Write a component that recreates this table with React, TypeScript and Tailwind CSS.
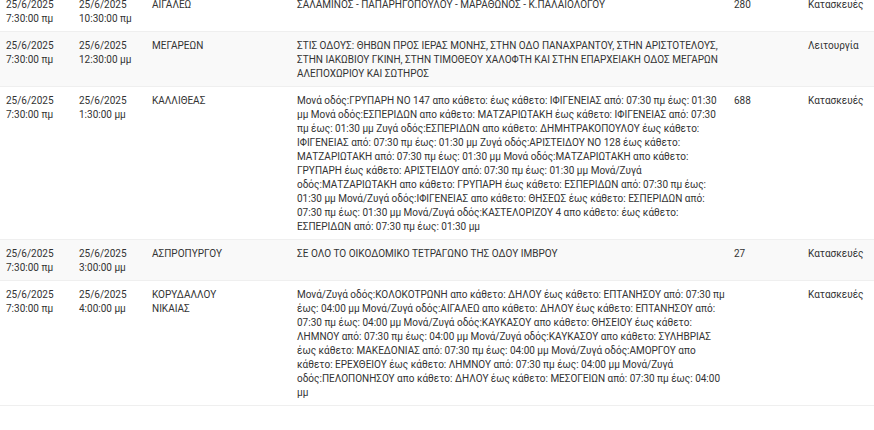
import React from 'react';

type Row = {
  start: [string, string];
  end: [string, string];
  area: string;
  streets: string;
  count?: string;
  reason: string;
};

const rows: Row[] = [
  {
    start: ['25/6/2025', '7:30:00 πμ'],
    end: ['25/6/2025', '10:30:00 πμ'],
    area: 'ΑΙΓΑΛΕΩ',
    streets: 'ΣΑΛΑΜΙΝΟΣ - ΠΑΠΑΡΗΓΟΠΟΥΛΟΥ - ΜΑΡΑΘΩΝΟΣ - Κ.ΠΑΛΑΙΟΛΟΓΟΥ',
    count: '280',
    reason: 'Κατασκευές',
  },
  {
    start: ['25/6/2025', '7:30:00 πμ'],
    end: ['25/6/2025', '12:30:00 μμ'],
    area: 'ΜΕΓΑΡΕΩΝ',
    streets:
      'ΣΤΙΣ ΟΔΟΥΣ: ΘΗΒΩΝ ΠΡΟΣ ΙΕΡΑΣ ΜΟΝΗΣ, ΣΤΗΝ ΟΔΟ ΠΑΝΑΧΡΑΝΤΟΥ, ΣΤΗΝ ΑΡΙΣΤΟΤΕΛΟΥΣ, ΣΤΗΝ ΙΑΚΩΒΙΟΥ ΓΚΙΝΗ, ΣΤΗΝ ΤΙΜΟΘΕΟΥ ΧΑΛΟΦΤΗ ΚΑΙ ΣΤΗΝ ΕΠΑΡΧΕΙΑΚΗ ΟΔΟΣ ΜΕΓΑΡΩΝ ΑΛΕΠΟΧΩΡΙΟΥ ΚΑΙ ΣΩΤΗΡΟΣ',
    reason: 'Λειτουργία',
  },
  {
    start: ['25/6/2025', '7:30:00 πμ'],
    end: ['25/6/2025', '1:30:00 μμ'],
    area: 'ΚΑΛΛΙΘΕΑΣ',
    streets:
      'Μονά οδός:ΓΡΥΠΑΡΗ ΝΟ 147 απο κάθετο: έως κάθετο: ΙΦΙΓΕΝΕΙΑΣ από: 07:30 πμ έως: 01:30 μμ Μονά οδός:ΕΣΠΕΡΙΔΩΝ απο κάθετο: ΜΑΤΖΑΡΙΩΤΑΚΗ έως κάθετο: ΙΦΙΓΕΝΕΙΑΣ από: 07:30 πμ έως: 01:30 μμ Ζυγά οδός:ΕΣΠΕΡΙΔΩΝ απο κάθετο: ΔΗΜΗΤΡΑΚΟΠΟΥΛΟΥ έως κάθετο: ΙΦΙΓΕΝΕΙΑΣ από: 07:30 πμ έως: 01:30 μμ Ζυγά οδός:ΑΡΙΣΤΕΙΔΟΥ ΝΟ 128 έως κάθετο: ΜΑΤΖΑΡΙΩΤΑΚΗ από: 07:30 πμ έως: 01:30 μμ Μονά οδός:ΜΑΤΖΑΡΙΩΤΑΚΗ απο κάθετο: ΓΡΥΠΑΡΗ έως κάθετο: ΑΡΙΣΤΕΙΔΟΥ από: 07:30 πμ έως: 01:30 μμ Μονά/Ζυγά οδός:ΜΑΤΖΑΡΙΩΤΑΚΗ απο κάθετο: ΓΡΥΠΑΡΗ έως κάθετο: ΕΣΠΕΡΙΔΩΝ από: 07:30 πμ έως: 01:30 μμ Μονά/Ζυγά οδός:ΙΦΙΓΕΝΕΙΑΣ απο κάθετο: ΘΗΣΕΩΣ έως κάθετο: ΕΣΠΕΡΙΔΩΝ από: 07:30 πμ έως: 01:30 μμ Μονά/Ζυγά οδός:ΚΑΣΤΕΛΟΡΙΖΟΥ 4 απο κάθετο: έως κάθετο: ΕΣΠΕΡΙΔΩΝ από: 07:30 πμ έως: 01:30 μμ',
    count: '688',
    reason: 'Κατασκευές',
  },
  {
    start: ['25/6/2025', '7:30:00 πμ'],
    end: ['25/6/2025', '3:00:00 μμ'],
    area: 'ΑΣΠΡΟΠΥΡΓΟΥ',
    streets: 'ΣΕ ΟΛΟ ΤΟ ΟΙΚΟΔΟΜΙΚΟ ΤΕΤΡΑΓΩΝΟ ΤΗΣ ΟΔΟΥ ΙΜΒΡΟΥ',
    count: '27',
    reason: 'Κατασκευές',
  },
  {
    start: ['25/6/2025', '7:30:00 πμ'],
    end: ['25/6/2025', '4:00:00 μμ'],
    area: 'ΚΟΡΥΔΑΛΛΟΥ ΝΙΚΑΙΑΣ',
    streets:
      'Μονά/Ζυγά οδός:ΚΟΛΟΚΟΤΡΩΝΗ απο κάθετο: ΔΗΛΟΥ έως κάθετο: ΕΠΤΑΝΗΣΟΥ από: 07:30 πμ έως: 04:00 μμ Μονά/Ζυγά οδός:ΑΙΓΑΛΕΩ απο κάθετο: ΔΗΛΟΥ έως κάθετο: ΕΠΤΑΝΗΣΟΥ από: 07:30 πμ έως: 04:00 μμ Μονά/Ζυγά οδός:ΚΑΥΚΑΣΟΥ απο κάθετο: ΘΗΣΕΙΟΥ έως κάθετο: ΛΗΜΝΟΥ από: 07:30 πμ έως: 04:00 μμ Μονά/Ζυγά οδός:ΚΑΥΚΑΣΟΥ απο κάθετο: ΣΥΛΗΒΡΙΑΣ έως κάθετο: ΜΑΚΕΔΟΝΙΑΣ από: 07:30 πμ έως: 04:00 μμ Μονά/Ζυγά οδός:ΑΜΟΡΓΟΥ απο κάθετο: ΕΡΕΧΘΕΙΟΥ έως κάθετο: ΛΗΜΝΟΥ από: 07:30 πμ έως: 04:00 μμ Μονά/Ζυγά οδός:ΠΕΛΟΠΟΝΗΣΟΥ απο κάθετο: ΔΗΛΟΥ έως κάθετο: ΜΕΣΟΓΕΙΩΝ από: 07:30 πμ έως: 04:00 μμ',
    reason: 'Κατασκευές',
  },
];

const cell = 'px-[6px] pt-[7px] pb-[5px]';

const App: React.FC = () => {
  return (
    <div className="h-[430px] w-[874px] overflow-hidden bg-white text-[10px] leading-[14px] text-[#333]" style={{ fontFamily: 'Roboto, "Noto Sans", sans-serif' }}>
      <table className="-mt-[9px] w-full table-fixed border-collapse">
        <colgroup>
          <col className="w-[73px]" />
          <col className="w-[73px]" />
          <col className="w-[145px]" />
          <col className="w-[437px]" />
          <col className="w-[74px]" />
          <col />
        </colgroup>
        <tbody>
          {rows.map((r, i) => (
            <tr key={i} className={`border-b border-[#efefef] align-top ${i % 2 === 1 ? 'bg-[#f9f9f9]' : 'bg-white'}`}>
              <td className={cell}>
                {r.start[0]}
                <br />
                {r.start[1]}
              </td>
              <td className={cell}>
                {r.end[0]}
                <br />
                {r.end[1]}
              </td>
              <td className={cell}>
                <div className="w-[90px]">{r.area}</div>
              </td>
              <td className={cell}>
                <div className="w-[430px]">{r.streets}</div>
              </td>
              <td className={cell}>{r.count}</td>
              <td className={cell}>{r.reason}</td>
            </tr>
          ))}
        </tbody>
      </table>
    </div>
  );
};

export default App;
